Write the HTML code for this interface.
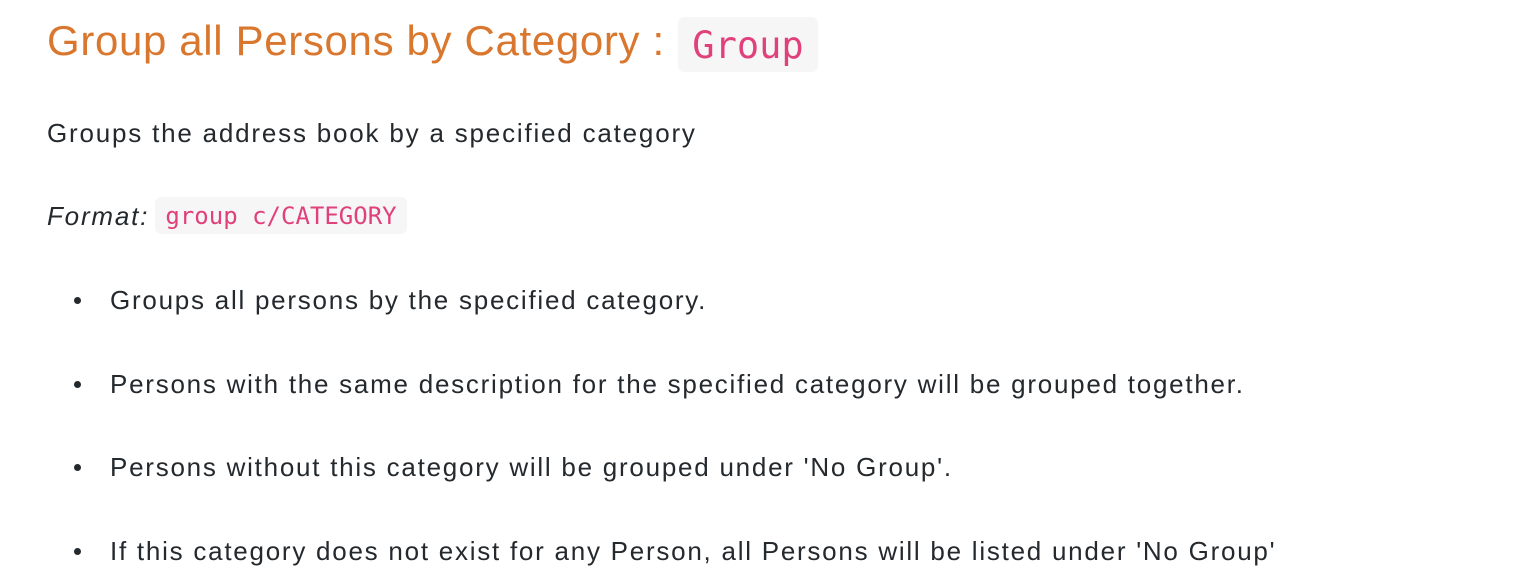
<!DOCTYPE html>
<html><head><style>
body{margin:0;background:#fff;width:1530px;height:584px;overflow:hidden;font-family:"Liberation Sans",sans-serif;color:#24292e}
.a{position:absolute;white-space:nowrap}
h1{position:absolute;left:47px;top:17px;margin:0;font-weight:normal;font-size:42px;color:#d9772e;white-space:nowrap;letter-spacing:0.65px}
code{font-family:"DejaVu Sans Mono","Liberation Mono",monospace;color:#e0407b;background:#f6f6f6;border-radius:6px}
.c1{position:absolute;left:678px;top:17px;width:140px;height:55px;font-size:37px;line-height:58px;text-align:center}
.p{font-size:26px;left:47px;letter-spacing:1.8px}
.li{font-size:26px;left:110px;letter-spacing:1.75px}
.dot{position:absolute;left:74px;width:7px;height:7px;border-radius:50%;background:#24292e}
</style></head><body>
<h1>Group all Persons by Category :</h1>
<code class="c1">Group</code>
<div class="a p" style="top:118px">Groups the address book by a specified category</div>
<div class="a p" style="top:201px"><i>Format:</i></div>
<code class="a" style="left:155px;top:197px;width:252px;height:37px;font-size:24px;line-height:38px;text-align:center">group c/CATEGORY</code>
<div class="dot" style="top:297px"></div><div class="a li" style="top:285px">Groups all persons by the specified category.</div>
<div class="dot" style="top:381px"></div><div class="a li" style="top:369px">Persons with the same description for the specified category will be grouped together.</div>
<div class="dot" style="top:464px"></div><div class="a li" style="top:452px">Persons without this category will be grouped under 'No Group'.</div>
<div class="dot" style="top:548px"></div><div class="a li" style="top:536px">If this category does not exist for any Person, all Persons will be listed under 'No Group'</div>
</body></html>
